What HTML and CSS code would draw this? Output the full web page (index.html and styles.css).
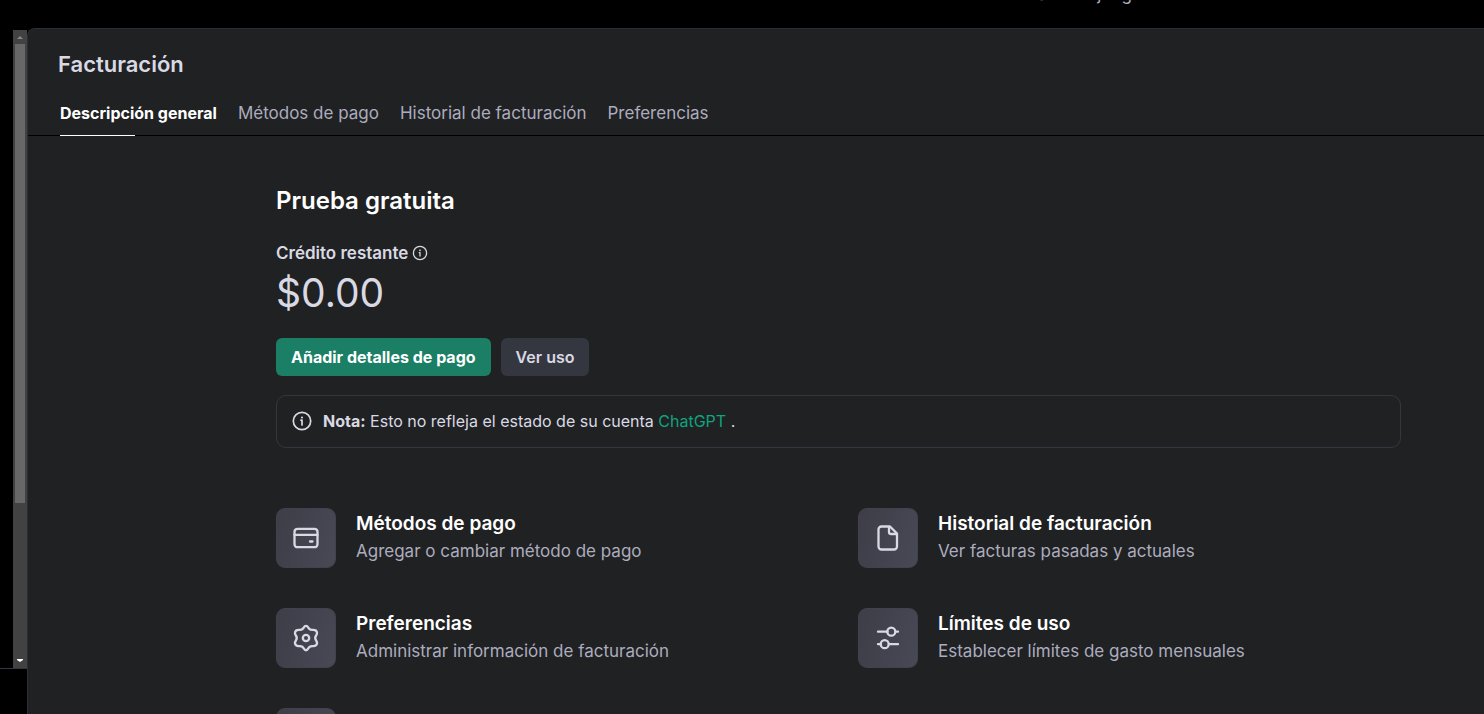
FILE: index.html
```
<!DOCTYPE html>
<html lang="es">
<head>
<meta charset="utf-8">
<title>Facturación</title>
<link rel="stylesheet" href="styles.css">
</head>
<body>
<header class="topbar"><a class="topbar-link" href="#">Patio de juegos</a></header>
<div class="layout">
  <aside class="sidebar">
    <div class="scrollbar">
      <svg class="arrow arrow-up" viewBox="0 0 14 14"><path d="M4 9h6L7 6z"/></svg>
      <div class="thumb"></div>
      <svg class="arrow arrow-down" viewBox="0 0 14 14"><path d="M4 5h6v1L7 8 4 6z"/></svg>
    </div>
  </aside>
  <main class="panel">
    <div class="panel-head">
      <h1 class="page-title">Facturación</h1>
      <nav class="tabs">
        <a class="tab tab-active" href="#">Descripción general</a>
        <a class="tab" href="#">Métodos de pago</a>
        <a class="tab" href="#">Historial de facturación</a>
        <a class="tab" href="#">Preferencias</a>
      </nav>
    </div>
    <div class="content">
      <h2 class="plan">Prueba gratuita</h2>
      <div class="credit-label">Crédito restante
        <svg class="icon-small" viewBox="0 0 16 16"><circle cx="8" cy="8" r="6.6"/><path d="M7.2 7.6H8V11"/><circle class="dot" cx="8" cy="5.3" r=".9"/></svg>
      </div>
      <div class="amount">$0.00</div>
      <div class="actions">
        <button class="btn btn-primary" type="button">Añadir detalles de pago</button>
        <button class="btn" type="button">Ver uso</button>
      </div>
      <div class="note">
        <svg class="icon-note" viewBox="0 0 20 20"><circle cx="10" cy="10" r="8.7"/><path d="M9 9.2h1V14"/><circle class="dot" cx="10" cy="6.5" r="1.1"/></svg>
        <p class="note-text"><b>Nota:</b> Esto no refleja el estado de su cuenta <a class="note-link" href="#">ChatGPT</a> .</p>
      </div>
      <div class="cards">
        <a class="card" href="#">
          <span class="tile"><svg class="icon" viewBox="0 0 28 28"><rect x="2.500" y="4.800" width="23" height="18.400" rx="3"/><path d="M2.500 10.800h23M18 17.500h2.500"/></svg></span>
          <span class="card-body"><span class="card-title">Métodos de pago</span><span class="card-text">Agregar o cambiar método de pago</span></span>
        </a>
        <a class="card" href="#">
          <span class="tile"><svg class="icon" viewBox="0 0 28 28"><path d="M16 2.500H7.500a3 3 0 0 0-3 3v17a3 3 0 0 0 3 3h12.500a3 3 0 0 0 3-3V9.500zM15 2.500V8a2 2 0 0 0 2 2h6"/></svg></span>
          <span class="card-body"><span class="card-title">Historial de facturación</span><span class="card-text">Ver facturas pasadas y actuales</span></span>
        </a>
        <a class="card" href="#">
          <span class="tile"><svg class="icon" viewBox="0 0 28 28"><path d="M11.800 3.500C13 1.200 15 1.200 16.200 3.500C17.200 5.500 18.200 6.100 20.500 5.900C23.400 5.600 24.600 6.600 25 8.400C25.300 9.700 24.800 10.500 24.100 11.500C22.900 13.200 22.900 14.800 24.100 16.500C24.800 17.500 25.300 18.300 25 19.600C24.600 21.400 23.400 22.400 20.500 22.100C18.200 21.900 17.200 22.500 16.200 24.500C15 26.800 13 26.800 11.800 24.500C10.800 22.500 9.800 21.900 7.500 22.100C4.600 22.400 3.400 21.400 3 19.600C2.700 18.300 3.200 17.500 3.900 16.500C5.100 14.800 5.100 13.200 3.900 11.500C3.200 10.500 2.700 9.700 3 8.400C3.400 6.600 4.600 5.600 7.500 5.900C9.800 6.100 10.800 5.500 11.800 3.500Z"/><circle cx="14" cy="14" r="3.200"/></svg></span>
          <span class="card-body"><span class="card-title">Preferencias</span><span class="card-text">Administrar información de facturación</span></span>
        </a>
        <a class="card" href="#">
          <span class="tile"><svg class="icon" viewBox="0 0 28 28"><path d="M4 7.700h9.500M21.500 7.700H24M4 20.200h3M14.800 20.200H24"/><circle cx="17.300" cy="7.700" r="4"/><circle cx="10.700" cy="20.200" r="4"/></svg></span>
          <span class="card-body"><span class="card-title">Límites de uso</span><span class="card-text">Establecer límites de gasto mensuales</span></span>
        </a>
        <a class="card" href="#"><span class="tile"></span></a>
      </div>
    </div>
  </main>
</div>
</body>
</html>
```
FILE: styles.css
```
* { box-sizing: border-box; }
html, body { height: 100%; }
body {
  margin: 0;
  display: flex;
  flex-direction: column;
  overflow: hidden;
  background: #000;
  color: #d9d9e3;
  font-family: Inter, "Liberation Sans", sans-serif;
  font-size: 17px;
  line-height: 24px;
}
a { color: inherit; text-decoration: none; }
h1, h2, p { margin: 0; }
svg { fill: none; stroke: currentColor; stroke-linecap: round; stroke-linejoin: round; flex: none; }
.dot { fill: currentColor; stroke: none; }

.topbar { flex: none; height: 28px; display: flex; justify-content: flex-end; padding-right: 333px; overflow: hidden; }
.topbar-link { margin-top: -18px; height: 24px; color: #acacbe; }

.layout { flex: 1; min-height: 0; display: flex; }
.sidebar { width: 27px; flex: none; display: flex; padding: 2px 0 0 13px; margin-bottom: 45px; border-bottom: 1px solid #353740; }
.scrollbar { flex: 1; display: flex; flex-direction: column; align-items: center; background: #424242; }
.thumb { width: 10px; height: 72%; background: #686868; }
.arrow { width: 14px; height: 14px; stroke: none; fill: #868686; }
.arrow-down { margin-top: auto; fill: #fff; }

.panel {
  flex: 1;
  min-width: 0;
  overflow: hidden;
  background: #202123;
  border: solid #2b2d37;
  border-width: 1px 0 0 1px;
  border-top-left-radius: 8px;
}
.panel-head { padding: 19px 32px 0; border-bottom: 1px solid #000; }
.page-title { margin-left: -2px; font-size: 22px; line-height: 32px; font-weight: 600; }
.tabs { display: flex; gap: 21px; padding-top: 19px; }
.tab { position: relative; height: 36px; line-height: 28px; color: #acacbe; }
.tab-active { color: #fff; font-size: 16px; font-weight: 700; }
.tab-active::after { content: ""; position: absolute; left: 0; bottom: -1px; width: 75px; height: 1px; background: #fff; }

.content { padding: 49px 83px 0 248px; }
.plan { font-size: 24px; line-height: 32px; font-weight: 600; color: #fff; }
.credit-label { display: flex; align-items: center; gap: 4px; margin-top: 24px; font-weight: 600; }
.icon-small { width: 16px; height: 16px; stroke-width: 1.3; }
.amount { font-size: 39px; line-height: 56px; }
.actions { display: flex; gap: 10px; margin-top: 17px; }
.btn { height: 38px; padding: 0 15px; border: 0; border-radius: 6px; background: #353740; color: #d9d9e3; font: inherit; font-size: 16px; font-weight: 600; }
.btn-primary { background: #1a7f64; color: #fff; font-weight: 700; }
.note { display: flex; align-items: center; gap: 11px; margin-top: 19px; padding: 13px 15px 14px; border: 1px solid #353740; border-radius: 10px; font-size: 16px; }
.icon-note { width: 20px; height: 20px; stroke-width: 1.7; }
.note-link { color: #10a37f; }
.cards { display: grid; grid-template-columns: 1fr 1fr; gap: 40px 39px; margin-top: 60px; }
.card { display: flex; gap: 20px; }
.tile { display: flex; align-items: center; justify-content: center; width: 60px; height: 60px; flex: none; border-radius: 9px; border: 1px solid #41424e; background: linear-gradient(105deg, #3e3d48, #474955); }
.icon { width: 28px; height: 28px; stroke-width: 2.3; }
.card-body { display: flex; flex-direction: column; padding-top: 2px; }
.card-title { font-size: 19px; line-height: 28px; font-weight: 600; color: #fff; }
.card-text { line-height: 26px; color: #acacbe; }
```
